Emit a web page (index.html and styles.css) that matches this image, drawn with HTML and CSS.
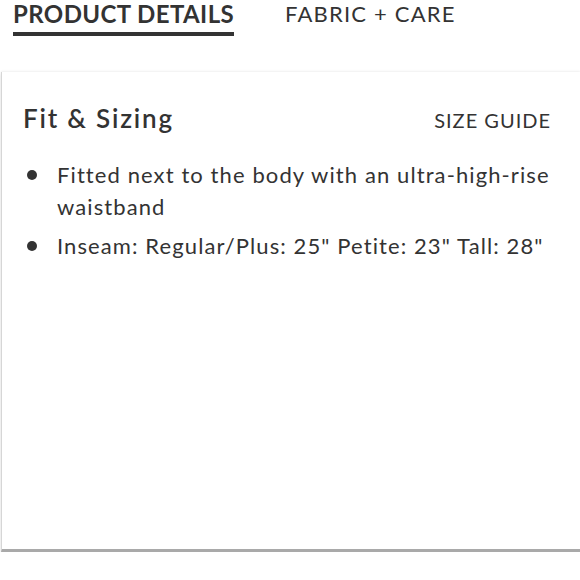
FILE: index.html
```html
<!DOCTYPE html>
<html lang="en">
<head>
<meta charset="utf-8">
<title>Product Details</title>
<link rel="stylesheet" href="styles.css">
</head>
<body>
  <nav class="tabs">
    <div class="tab tab-active">PRODUCT DETAILS</div>
    <div class="tab">FABRIC + CARE</div>
  </nav>
  <section class="card">
    <header class="card-head">
      <h2 class="card-title">Fit &amp; Sizing</h2>
      <a class="size-guide">SIZE GUIDE</a>
    </header>
    <ul class="bullets">
      <li class="bullet-item"><span class="dot"></span><span class="bullet-text">Fitted next to the body with an ultra-high-rise waistband</span></li>
      <li class="bullet-item"><span class="dot"></span><span class="bullet-text">Inseam: Regular/Plus: 25" Petite: 23" Tall: 28"</span></li>
    </ul>
  </section>
</body>
</html>
```

FILE: styles.css
```css
html, body {
  margin: 0;
  padding: 0;
  background: #ffffff;
}
body {
  font-family: "Lato", "Open Sans", sans-serif;
  color: #333333;
}
.tabs {
  display: flex;
  align-items: flex-start;
  gap: 51px;
  padding-left: 13px;
}
.tab {
  font-size: 22px;
  line-height: 28px;
  padding-top: 0;
  padding-bottom: 4px;
  letter-spacing: 1.2px;
  color: #333333;
}
.tab-active {
  font-size: 24px;
  font-weight: 700;
  border-bottom: 4px solid #333333;
  letter-spacing: 0.4px;
}
.card {
  margin-top: 36px;
  margin-left: 1px;
  height: 480px;
  box-sizing: border-box;
  border-left: 1px solid #d6d6d6;
  border-bottom: 3px solid #a9a9a9;
  box-shadow: 0 -1px 2px rgba(0, 0, 0, 0.06), 0 2px 3px rgba(0, 0, 0, 0.12);
  padding: 31px 8px 0 21px;
  background: #ffffff;
}
.card-head {
  display: flex;
  justify-content: space-between;
  align-items: baseline;
  padding-right: 21px;
}
.card-title {
  margin: 0;
  font-size: 26px;
  line-height: 30px;
  font-weight: 600;
  letter-spacing: 1.8px;
  color: #333333;
}
.size-guide {
  font-size: 20px;
  line-height: 30px;
  letter-spacing: 1px;
  color: #333333;
}
.bullets {
  list-style: none;
  margin: 24px 0 0 0;
  padding: 0;
  display: flex;
  flex-direction: column;
  gap: 7px;
}
.bullet-item {
  display: flex;
  align-items: flex-start;
  font-size: 22px;
  line-height: 32px;
  letter-spacing: 1.1px;
}
.dot {
  flex: none;
  width: 10px;
  height: 10px;
  border-radius: 50%;
  background: #333333;
  margin: 11px 20px 0 4px;
}
.bullet-text {
  flex: 1;
}
```
